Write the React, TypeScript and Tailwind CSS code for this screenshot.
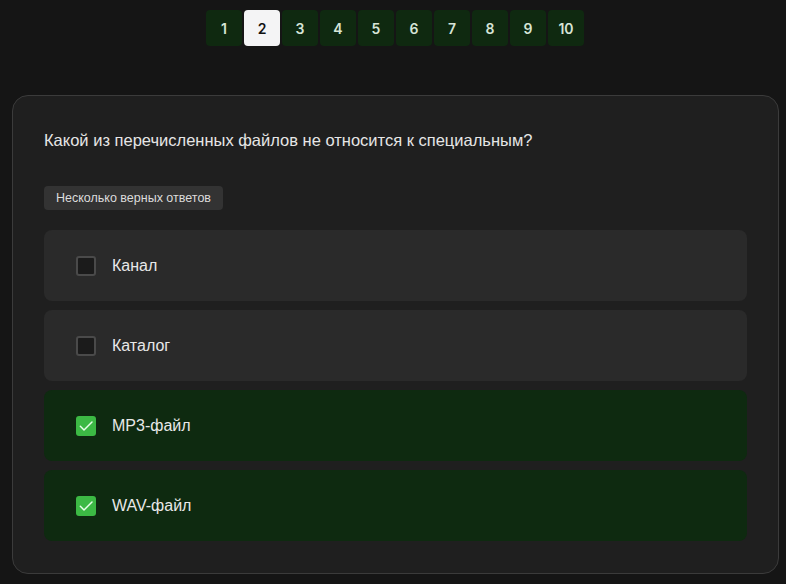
const pages = [1, 2, 3, 4, 5, 6, 7, 8, 9, 10];

const options = [
  { label: "Канал", checked: false },
  { label: "Каталог", checked: false },
  { label: "MP3-файл", checked: true },
  { label: "WAV-файл", checked: true },
];

function Checkbox({ checked }: { checked: boolean }) {
  if (checked) {
    return (
      <div className="w-5 h-5 rounded-[3px] bg-[#3cb944] flex items-center justify-center">
        <svg width="16" height="16" viewBox="0 0 24 24" fill="none" stroke="#e8ffe9" strokeWidth="2.2" strokeLinecap="round" strokeLinejoin="round">
          <path d="M3.5 12.5l5.5 5.5L21 6" />
        </svg>
      </div>
    );
  }
  return <div className="w-5 h-5 rounded-[3px] bg-[#1b1b1b] border-2 border-[#4a4a4a]" />;
}

export default function App() {
  return (
    <div className="min-h-[584px] bg-[#151515] font-['Liberation_Sans',Arial,sans-serif] pt-[10px] pl-3 pr-[7px]">
      <div className="flex justify-center gap-[2px] pr-[1px]">
        {pages.map((p) => (
          <button
            key={p}
            className={
              p === 2
                ? "w-9 h-9 rounded-[4px] bg-[#f4f4f5] text-[#111] text-[14px] font-semibold font-['Inter',sans-serif]"
                : "w-9 h-9 rounded-[4px] bg-[#0f2910] text-[#d6e4d6] text-[14px] font-semibold font-['Inter',sans-serif]"
            }
          >
            {p}
          </button>
        ))}
      </div>

      <div className="mt-[49px] rounded-[16px] border border-[#3b3b3b] bg-[#1f1f1f] px-[31px] pt-[34px] pb-8">
        <p className="text-[16.5px] leading-[20px] text-[#e6e6e6]">
          Какой из перечисленных файлов не относится к специальным?
        </p>
        <div className="mt-[36px] flex">
          <div className="h-6 flex items-center rounded-[4px] bg-[#333333] px-3 text-[12.5px] text-[#dcdcdc]">
            Несколько верных ответов
          </div>
        </div>
        <div className="mt-5 flex flex-col gap-[9px]">
          {options.map((o) => (
            <div
              key={o.label}
              className={
                (o.checked ? "bg-[#0e2a10]" : "bg-[#2a2a2a]") +
                " h-[71px] rounded-[8px] flex items-center gap-4 px-8"
              }
            >
              <Checkbox checked={o.checked} />
              <span className="text-[16px] text-[#e8e8e8]">{o.label}</span>
            </div>
          ))}
        </div>
      </div>
    </div>
  );
}
